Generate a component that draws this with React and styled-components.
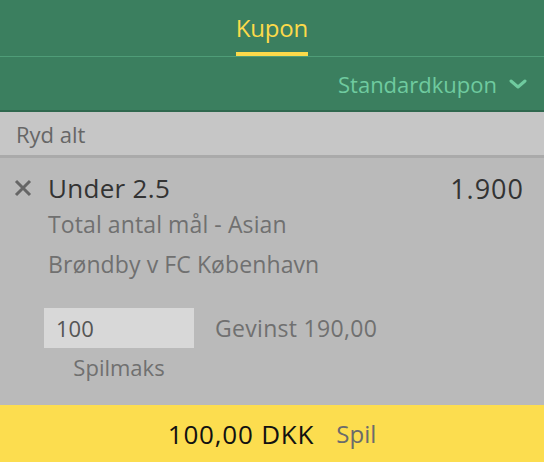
import React from "react";
import styled, { createGlobalStyle } from "styled-components";

const GlobalStyle = createGlobalStyle`
  html, body {
    margin: 0;
    padding: 0;
    background: #bababa;
    font-family: "Open Sans", "Liberation Sans", sans-serif;
    overflow: hidden;
  }
`;

const Page = styled.div`
  display: flex;
  flex-direction: column;
  width: 544px;
  height: 462px;
  background: #bababa;
`;

const TabBar = styled.div`
  display: flex;
  justify-content: center;
  height: 56px;
  background: #3b7f5f;
  border-bottom: 1px solid #4f9d78;
`;

const Tab = styled.div`
  display: flex;
  align-items: center;
  padding-top: 2px;
  font-size: 24px;
  letter-spacing: -0.2px;
  color: #fcda4a;
  border-bottom: 4px solid ${({ active }) => (active ? "#fcda4a" : "transparent")};
`;

const KuponBar = styled.div`
  display: flex;
  justify-content: flex-end;
  align-items: center;
  gap: 12px;
  height: 53px;
  padding-right: 17px;
  background: #3b7f5f;
  border-bottom: 2px solid #2f684e;
  color: #6fcb9f;
  font-size: 22px;
`;

const ClearBar = styled.div`
  display: flex;
  align-items: center;
  height: 43px;
  padding-left: 16px;
  background: #c6c6c6;
  border-bottom: 3px solid #aaaaaa;
  color: #666;
  font-size: 22px;
`;

const Bet = styled.div`
  flex: 1;
  display: flex;
  flex-direction: column;
  padding: 14px 20px 0 14px;
`;

const Selection = styled.div`
  display: flex;
  align-items: center;
  height: 32px;
`;

const Remove = styled.div`
  display: flex;
  width: 34px;
  color: #666;
`;

const SelectionName = styled.div`
  flex: 1;
  font-size: 26px;
  letter-spacing: 0.3px;
  color: #333;
`;

const Odds = styled.div`
  font-size: 27px;
  letter-spacing: 1px;
  color: #333;
`;

const Detail = styled.div`
  padding-left: 34px;
  height: 40px;
  line-height: 40px;
  font-size: 23px;
  letter-spacing: 0.1px;
  color: #707070;
`;

const StakeRow = styled.div`
  display: flex;
  align-items: flex-start;
  gap: 21px;
  margin-top: 24px;
  padding-left: 30px;
`;

const StakeCol = styled.div`
  display: flex;
  flex-direction: column;
  align-items: center;
  gap: 4px;
`;

const StakeInput = styled.div`
  width: 138px;
  height: 40px;
  line-height: 40px;
  padding-left: 12px;
  background: #d8d8d8;
  font-size: 22px;
  color: #555;
`;

const Muted = styled.div`
  font-size: 22px;
  color: #707070;
`;

const Winnings = styled(Muted)`
  margin-top: 4px;
  font-size: 23px;
  letter-spacing: 0.3px;
`;

const Footer = styled.div`
  display: flex;
  justify-content: center;
  align-items: center;
  gap: 22px;
  height: 57px;
  background: #fcdd4f;
  font-size: 24px;
`;

const Total = styled.span`
  font-size: 26px;
  letter-spacing: 0.8px;
  color: #111;
`;

const Play = styled.span`
  color: #6b6b6b;
`;

const Chevron = () => (
  <svg width="18" height="10" viewBox="0 0 18 10">
    <path d="M2 2 L9 8 L16 2" fill="none" stroke="currentColor" strokeWidth="3" strokeLinecap="round" strokeLinejoin="round" />
  </svg>
);

const Cross = () => (
  <svg width="18" height="18" viewBox="0 0 18 18">
    <path d="M2 2 L16 16 M16 2 L2 16" stroke="currentColor" strokeWidth="3" />
  </svg>
);

const App = () => (
  <Page>
    <GlobalStyle />
    <TabBar>
      <Tab active>Kupon</Tab>
    </TabBar>
    <KuponBar>
      Standardkupon <Chevron />
    </KuponBar>
    <ClearBar>Ryd alt</ClearBar>
    <Bet>
      <Selection>
        <Remove>
          <Cross />
        </Remove>
        <SelectionName>Under 2.5</SelectionName>
        <Odds>1.900</Odds>
      </Selection>
      <Detail>Total antal mål - Asian</Detail>
      <Detail>Brøndby v FC København</Detail>
      <StakeRow>
        <StakeCol>
          <StakeInput>100</StakeInput>
          <Muted>Spilmaks</Muted>
        </StakeCol>
        <Winnings>Gevinst 190,00</Winnings>
      </StakeRow>
    </Bet>
    <Footer>
      <Total>100,00 DKK</Total>
      <Play>Spil</Play>
    </Footer>
  </Page>
);

export default App;
